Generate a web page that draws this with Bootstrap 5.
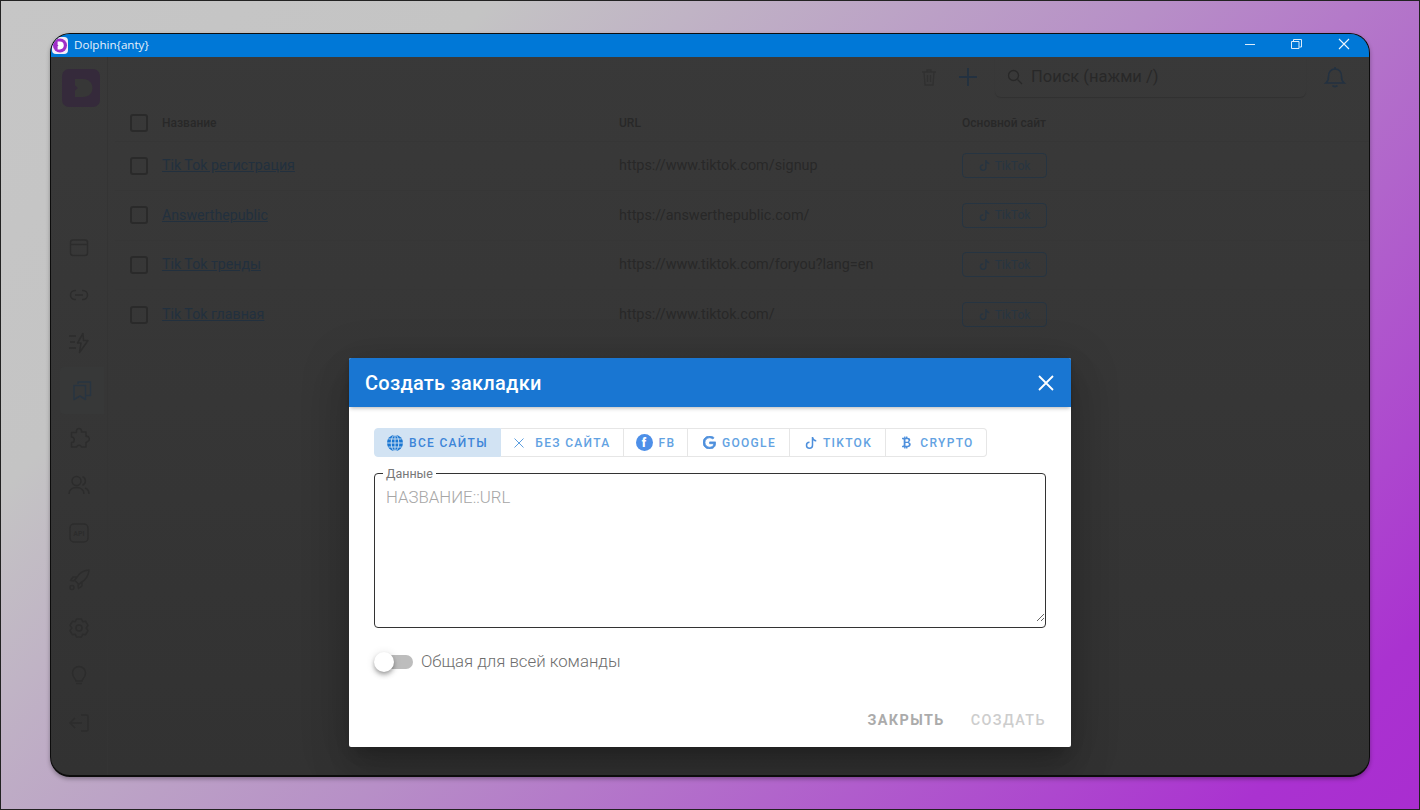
<!DOCTYPE html>
<html lang="ru">
<head>
<meta charset="utf-8">
<title>Dolphin{anty}</title>
<link href="https://cdn.jsdelivr.net/npm/bootstrap@5.3.0/dist/css/bootstrap.min.css" rel="stylesheet">
<style>
html,body{height:810px;overflow:hidden}
body{font-family:Roboto,"Liberation Sans",sans-serif;background:linear-gradient(135deg,#c6c6c6 0%,#c4c4c4 22%,#b78fc7 52%,#aa32d0 92%,#a92dd0 100%);border:1px solid #222;padding:32px 49px 33px 49px}
.app-win{position:relative;width:1320px;height:744px;border:1px solid #0c0c0c;border-bottom-width:2px;border-radius:20px;overflow:hidden;box-shadow:0 2px 4px rgba(0,0,0,.3);background:linear-gradient(180deg,#393939 0%,#363636 50%,#323232 100%)}
.title-bar{height:23px;background:#0078d7;color:#e4f0fb;font:11.600px/21px "Open Sans","Noto Sans",sans-serif;padding-left:1px}
.title-logo{width:16px;height:17px;margin-right:6px}
.win-ctl{width:48px;height:22px}
.app-body{height:719px}
.side{width:57px;border-right:1px solid #343434;padding-top:12px}
.side-logo{width:38px;height:38px;margin:0 0 0 11px}
.side-list{margin-top:117px}
.side-item{height:47.500px;width:56px;color:#2c2c2c}
.side-item.is-on{background:#373838;color:#283440;border-radius:4px 0 0 4px;width:44px;margin-left:9px}
.side-item svg{width:22px;height:22px}
.main-pane{min-width:0}
.top-row{height:40px;margin-bottom:9px}
.trash-ic{margin-right:19px}
.plus-ic{margin-right:17px}
.search-box{width:311px;height:39px;margin-right:17px;border-radius:0 0 6px 6px;box-shadow:0 1px 1px rgba(0,0,0,.14);color:#282828;font-size:16.500px;padding-left:12px}
.data-tbl{margin:0 0 0 7px;width:calc(100% - 7px);--bs-table-bg:transparent;color:#2b2b2b;font-size:14.400px;table-layout:fixed}
.data-tbl td,.data-tbl th{border-bottom:1px solid #363636;padding:0;vertical-align:middle}
.data-tbl th{font-size:12px;font-weight:500;height:35px;color:#282828}
.data-tbl td{height:49.600px;color:#282828}
.data-tbl a{color:#22303e;font-size:14.200px}
.box-check{display:block;width:18px;height:18px;border:2px solid #2a2a2a;border-radius:3px;margin-left:15px}
.site-tag{display:inline-flex;align-items:center;justify-content:center;gap:5px;width:85px;height:25px;border:1px solid #263441;border-radius:4px;font-size:12px;color:#273541}
.modal-layer{position:absolute;inset:0;display:flex;justify-content:center;align-items:flex-end;padding-bottom:28px}
.dlg{width:722px;height:389px;background:#fff;border-radius:2px;box-shadow:0 11px 15px -7px rgba(0,0,0,.2),0 24px 38px 3px rgba(0,0,0,.14),0 9px 46px 8px rgba(0,0,0,.12)}
.dlg-head{height:49px;background:#1976d2;color:#fff;padding:0 15px 0 16px;border-radius:2px 2px 0 0;box-shadow:0 2px 4px -1px rgba(0,0,0,.3)}
.dlg-title{font-size:20px;font-weight:500;letter-spacing:.25px;line-height:1;margin:0}
.dlg-close{width:20px;height:20px}
.dlg-body{padding:21px 25px 0}
.tab-grp{height:29px;display:inline-flex;vertical-align:top}
.tab-btn{height:29px;padding:0;font-size:12px;font-weight:500;letter-spacing:1.300px;color:#62a2e2;background:#fff;border:1px solid #e6e6e6;border-left-width:0;border-radius:0;display:inline-flex;align-items:center;justify-content:center;gap:6px;text-transform:uppercase;line-height:1}
.tab-btn:first-child{border-left-width:1px;border-radius:4px 0 0 4px;background:#d2e3f3;color:#3d85d8;border-color:#d2e3f3}
.tab-btn:last-child{border-radius:0 4px 4px 0}
.tab-btn svg text{text-transform:none}
.data-set{margin-top:10px;height:161px;position:relative;border:1px solid #333;border-radius:4px;padding:0 0 0 8px}
.data-set legend{float:none;width:auto;font-size:12.500px;line-height:13px;color:#777;padding:0 3px;margin:0}
.data-area{display:block;width:100%;height:142px;border:0;outline:0;padding:5px 0 0 3px;font:300 16.800px/24px Roboto,sans-serif;background:transparent;resize:vertical}
.data-area::placeholder{color:#a6a6a6;opacity:1}
.sw-row{margin-top:20px;height:28px;color:#6d6d6d;font-size:16.800px;font-weight:300}
.sw-track{position:relative;display:block;width:34px;height:14px;margin:0 8px 0 5px;background:#bdbdbd;border-radius:7px}
.sw-knob{position:absolute;left:-5px;top:-3px;width:20px;height:20px;border-radius:50%;background:#fff;box-shadow:0 2px 4px -1px rgba(0,0,0,.3),0 4px 5px rgba(0,0,0,.14),0 1px 10px rgba(0,0,0,.12)}
.dlg-foot{padding:36px 25px 0 0;gap:26px;font-size:14.400px;font-weight:700;letter-spacing:1.400px;text-transform:uppercase;color:#ababab}
.dlg-foot .btn{padding:0;border:0;font:inherit;letter-spacing:inherit;color:inherit;line-height:18px;text-transform:uppercase}
.dlg-foot .btn.is-off{color:#cdcdcd;font-weight:500}
</style>
</head>
<body>
<div class="app-win">
  <div class="title-bar d-flex align-items-center">
    <svg class="title-logo" viewBox="0 0 16 17"><rect width="16" height="17" rx="4" fill="#f4eefa"/><circle cx="8" cy="8.500" r="7" fill="#a02fc8"/><path d="M5.600 4.600h2.200c2.600 0 4 1.600 4 3.900s-1.400 3.900-4 3.900H5.600V9.300l.9-.8-.9-.8z" fill="#fff"/></svg>
    <span class="flex-grow-1 align-self-start">Dolphin{anty}</span>
    <svg class="win-ctl" viewBox="0 2 48 22"><path d="M21 11.500h10" stroke="#dcecfa" fill="none"/></svg>
    <svg class="win-ctl" viewBox="0 2 48 22"><path d="M21.500 8.500V6.500h8v7.500h-2M19.500 8.500h7.500v7h-7.500z" stroke="#dcecfa" fill="none"/></svg>
    <svg class="win-ctl" viewBox="0 2 48 22" style="margin-right:1px"><path d="M19 6l10 10M29 6L19 16" stroke="#eef6fd" stroke-width="1.100" fill="none"/></svg>
  </div>
  <div class="app-body d-flex">
    <aside class="side flex-shrink-0">
      <svg class="side-logo d-block" viewBox="0 0 38 38"><rect width="38" height="38" rx="7" fill="#352a3b"/><path d="M13 10h8c6 0 9.500 4 9.500 9s-3.500 9-9.500 9h-8v-6.500l3-2.500-3-2.500z" fill="#373737"/></svg>
      <div class="side-list d-flex flex-column">
        <div class="side-item d-flex align-items-center justify-content-center"><svg viewBox="0 0 22 22" fill="none" stroke="currentColor" stroke-width="1.500"><rect x="2.500" y="3" width="17" height="15.500" rx="2.500"/><path d="M2.500 7.500h17"/></svg></div>
        <div class="side-item d-flex align-items-center justify-content-center"><svg viewBox="0 0 22 22" fill="none" stroke="currentColor" stroke-width="1.500"><path d="M8 6.500H7a4.500 4.500 0 0 0 0 9h1M14 6.500h1a4.500 4.500 0 0 1 0 9h-1M7 11h8"/></svg></div>
        <div class="side-item d-flex align-items-center justify-content-center"><svg viewBox="0 0 22 22" fill="none" stroke="currentColor" stroke-width="1.500" stroke-linejoin="round"><path d="M1 4h7M2 10h5M1 16h7M15 1.500 9.500 11H13l-1.500 9.500L20 8.500h-4.500z"/></svg></div>
        <div class="side-item is-on d-flex align-items-center justify-content-center"><svg viewBox="0 0 22 22" fill="none" stroke="currentColor" stroke-width="1.500" stroke-linejoin="round"><path d="M7 5V3h12.500v13.500H15"/><path d="M3 6.500h11.500v14L9 17l-6 3.500z"/></svg></div>
        <div class="side-item d-flex align-items-center justify-content-center"><svg viewBox="0 0 22 22" fill="none" stroke="currentColor" stroke-width="1.500" stroke-linejoin="round"><path d="M8.500 3.500a2.600 2.600 0 0 1 5 0V5h4.500v4.500a2.600 2.600 0 0 1 1.500 5 2.600 2.600 0 0 1-1.500 1V20h-4.500a2.700 2.700 0 0 0-5 0H3.500v-4.500a2.700 2.700 0 0 0 0-5.500V5.500h5z"/></svg></div>
        <div class="side-item d-flex align-items-center justify-content-center"><svg viewBox="0 0 22 22" fill="none" stroke="currentColor" stroke-width="1.500"><circle cx="8.500" cy="7" r="4.500"/><path d="M1 20c0-4 3-6.500 7.500-6.500S16 16 16 20M14.500 2.800a4.500 4.500 0 0 1 0 8.400M17 14c2.500.8 4 3 4 6"/></svg></div>
        <div class="side-item d-flex align-items-center justify-content-center"><svg viewBox="0 0 22 22" fill="none" stroke="currentColor" stroke-width="1.500"><rect x="2" y="2" width="18" height="18" rx="4"/><text x="11" y="13.800" text-anchor="middle" font-family="Roboto" font-size="7" font-weight="700" stroke="none" fill="currentColor">API</text></svg></div>
        <div class="side-item d-flex align-items-center justify-content-center"><svg viewBox="0 0 22 22" fill="none" stroke="currentColor" stroke-width="1.500" stroke-linejoin="round"><path d="M21 1c-6 .500-10 3-12.500 8L6.500 11 11 15.500l2-2c4.500-2.500 7.500-6.500 8-12.500zM9 8H5l-2.500 3.500 4 .500M14 13v4l-3.500 2.500-.5-4"/><circle cx="4" cy="18.500" r="2"/></svg></div>
        <div class="side-item d-flex align-items-center justify-content-center"><svg viewBox="0 0 22 22" fill="none" stroke="currentColor" stroke-width="1.500" stroke-linejoin="round"><circle cx="11" cy="11" r="3"/><path d="M8.500 2h5l1.200 2.700 3-.4 2.300 4-1.800 2.700 1.800 2.700-2.300 4-3-.4L13.500 20h-5l-1.200-2.700-3 .4-2.300-4L3.800 11 2 8.300l2.300-4 3 .4z"/></svg></div>
        <div class="side-item d-flex align-items-center justify-content-center"><svg viewBox="0 0 22 22" fill="none" stroke="currentColor" stroke-width="1.500"><path d="M8 17c0-2-3.500-3.500-3.500-8a6.500 6.500 0 0 1 13 0c0 4.500-3.500 6-3.500 8zM8 19.500h6"/></svg></div>
        <div class="side-item d-flex align-items-center justify-content-center"><svg viewBox="0 0 22 22" fill="none" stroke="currentColor" stroke-width="1.500"><path d="M13 3h5.500a1.500 1.500 0 0 1 1.500 1.500v13a1.500 1.500 0 0 1-1.500 1.500H13M14 11H2M7 6l-5 5 5 5"/></svg></div>
      </div>
    </aside>
    <main class="main-pane flex-grow-1">
      <div class="top-row d-flex align-items-center justify-content-end">
        <svg width="20" height="20" viewBox="0 0 20 20" class="trash-ic" fill="none" stroke="#303030" stroke-width="1.300"><path d="M3 5h14M8 5V3h4v2M5 5l1 13h8l1-13M8.500 8v7M11.500 8v7"/></svg>
        <svg width="20" height="20" viewBox="0 0 20 20" class="plus-ic" fill="none" stroke="#233140" stroke-width="1.800"><path d="M10 1v18M1 10h18"/></svg>
        <div class="search-box d-flex align-items-center">
          <svg width="16" height="16" viewBox="0 0 16 16" class="me-2" fill="none" stroke="#282828" stroke-width="1.300"><circle cx="6.500" cy="6.500" r="5"/><path d="M10.500 10.500 15 15"/></svg>
          <span>Поиск (нажми /)</span>
        </div>
        <svg width="24" height="24" viewBox="0 0 24 24" style="margin-right:22px" fill="none" stroke="#233140" stroke-width="1.600"><path d="M3 18c2-1.500 2.500-3 2.500-6.500C5.500 7 8 4 12 4s6.500 3 6.500 7.500c0 3.500.5 5 2.500 6.500zM9.500 20.500c1 1.500 4 1.500 5 0M12 4V2"/></svg>
      </div>
      <table class="table data-tbl">
        <colgroup><col style="width:47px"><col style="width:457px"><col style="width:343px"><col></colgroup>
        <thead><tr><th><span class="box-check"></span></th><th>Название</th><th>URL</th><th>Основной сайт</th></tr></thead>
        <tbody>
          <tr><td><span class="box-check"></span></td><td><a href="#">Tik Tok регистрация</a></td><td>https://www.tiktok.com/signup</td><td><span class="site-tag"><svg width="11" height="11" viewBox="0 0 16 16" fill="#263441"><path d="M9 0h1.980c.144.715.540 1.617 1.235 2.512C12.895 3.389 13.797 4 15 4v2c-1.753 0-3.070-.814-4-1.829V11a5 5 0 1 1-5-5v2a3 3 0 1 0 3 3V0Z"/></svg>TikTok</span></td></tr>
          <tr><td><span class="box-check"></span></td><td><a href="#">Answerthepublic</a></td><td>https://answerthepublic.com/</td><td><span class="site-tag"><svg width="11" height="11" viewBox="0 0 16 16" fill="#263441"><path d="M9 0h1.980c.144.715.540 1.617 1.235 2.512C12.895 3.389 13.797 4 15 4v2c-1.753 0-3.070-.814-4-1.829V11a5 5 0 1 1-5-5v2a3 3 0 1 0 3 3V0Z"/></svg>TikTok</span></td></tr>
          <tr><td><span class="box-check"></span></td><td><a href="#">Tik Tok тренды</a></td><td>https://www.tiktok.com/foryou?lang=en</td><td><span class="site-tag"><svg width="11" height="11" viewBox="0 0 16 16" fill="#263441"><path d="M9 0h1.980c.144.715.540 1.617 1.235 2.512C12.895 3.389 13.797 4 15 4v2c-1.753 0-3.070-.814-4-1.829V11a5 5 0 1 1-5-5v2a3 3 0 1 0 3 3V0Z"/></svg>TikTok</span></td></tr>
          <tr><td><span class="box-check"></span></td><td><a href="#">Tik Tok главная</a></td><td>https://www.tiktok.com/</td><td><span class="site-tag"><svg width="11" height="11" viewBox="0 0 16 16" fill="#263441"><path d="M9 0h1.980c.144.715.540 1.617 1.235 2.512C12.895 3.389 13.797 4 15 4v2c-1.753 0-3.070-.814-4-1.829V11a5 5 0 1 1-5-5v2a3 3 0 1 0 3 3V0Z"/></svg>TikTok</span></td></tr>
        </tbody>
      </table>
    </main>
  </div>
  <div class="modal-layer">
    <div class="dlg">
      <div class="dlg-head d-flex align-items-center justify-content-between">
        <h5 class="dlg-title">Создать закладки</h5>
        <svg class="dlg-close" viewBox="0 0 20 20" fill="none" stroke="#fff" stroke-width="1.800"><path d="M3 3l14 14M17 3 3 17"/></svg>
      </div>
      <div class="dlg-body">
        <div class="tab-grp" role="group">
          <button type="button" class="btn tab-btn" style="width:127px"><svg width="16" height="16" viewBox="0 0 16 16"><circle cx="8" cy="8" r="8" fill="#1976d2"/><path d="M0 8h16M1.500 4h13M1.500 12h13M8 0v16" stroke="#d2e3f3" stroke-width=".9" fill="none"/><ellipse cx="8" cy="8" rx="3.800" ry="8" stroke="#d2e3f3" stroke-width=".9" fill="none"/></svg>Все сайты</button>
          <button type="button" class="btn tab-btn" style="width:123px"><svg width="12" height="12" viewBox="0 0 12 12" class="me-1" fill="none" stroke="#5d9fe0" stroke-width="1"><path d="M1.500 1.500l9 9M10.500 1.500l-9 9"/></svg>Без сайта</button>
          <button type="button" class="btn tab-btn" style="width:64px"><svg width="17" height="17" viewBox="0 0 17 17"><circle cx="8.500" cy="8.500" r="8.500" fill="#4d8fe8"/><text x="8.500" y="13" text-anchor="middle" font-family="Roboto" font-weight="900" font-size="12" fill="#fff">f</text></svg>FB</button>
          <button type="button" class="btn tab-btn" style="width:102px;padding-left:2px"><svg width="13" height="13" viewBox="2 2 20 20" fill="#4d8fdc"><path d="M21.350 11.100H12.180V13.830H18.690C18.360 17.640 15.190 19.270 12.190 19.270C8.360 19.270 5 16.250 5 12C5 7.900 8.200 4.730 12.200 4.730C15.290 4.730 17.100 6.700 17.100 6.700L19 4.720C19 4.720 16.560 2 12.100 2C6.420 2 2.030 6.800 2.030 12C2.030 17.050 6.160 22 12.250 22C17.600 22 21.500 18.330 21.500 12.910C21.500 11.760 21.350 11.100 21.350 11.100Z" stroke="#4d8fdc" stroke-width="1.200"/></svg>Google</button>
          <button type="button" class="btn tab-btn" style="width:96px;padding-left:2px"><svg width="12" height="12" viewBox="0 0 16 16" fill="#4d8fdc"><path d="M9 0h1.980c.144.715.540 1.617 1.235 2.512C12.895 3.389 13.797 4 15 4v2c-1.753 0-3.070-.814-4-1.829V11a5 5 0 1 1-5-5v2a3 3 0 1 0 3 3V0Z"/></svg>TikTok</button>
          <button type="button" class="btn tab-btn" style="width:101px;padding-left:1px"><svg width="15" height="15" viewBox="0 0 16 16" fill="#4d8fdc"><path d="M5.500 13v1.250c0 .138.112.250.250.250h1a.250.250 0 0 0 .250-.250V13h.500v1.250c0 .138.112.250.250.250h1a.250.250 0 0 0 .250-.250V13h.084c1.992 0 3.416-1.033 3.416-2.820 0-1.502-1.007-2.323-2.186-2.440v-.088c.970-.242 1.683-.974 1.683-2.190C11.997 3.930 10.847 3 9.092 3H9V1.750a.250.250 0 0 0-.250-.250h-1a.250.250 0 0 0-.250.250V3h-.573V1.750a.250.250 0 0 0-.250-.250H5.750a.250.250 0 0 0-.250.250V3l-1.998.011a.250.250 0 0 0-.250.250v.989c0 .137.110.250.248.250l.755-.005a.750.750 0 0 1 .745.750v5.505a.750.750 0 0 1-.750.750l-.748.011a.250.250 0 0 0-.250.250v1c0 .138.112.250.250.250L5.500 13zm1.427-8.513h1.719c.906 0 1.438.498 1.438 1.312 0 .871-.575 1.362-1.877 1.362h-1.280V4.487zm0 4.051h1.840c1.137 0 1.756.580 1.756 1.524 0 .953-.626 1.450-2.158 1.450H6.927V8.539z"/></svg>Crypto</button>
        </div>
        <fieldset class="data-set">
          <legend>Данные</legend>
          <textarea class="data-area" placeholder="НАЗВАНИЕ::URL"></textarea>
        </fieldset>
        <div class="sw-row d-flex align-items-center"><span class="sw-track"><span class="sw-knob"></span></span><span>Общая для всей команды</span></div>
      </div>
      <div class="dlg-foot d-flex justify-content-end">
        <button type="button" class="btn">Закрыть</button>
        <button type="button" class="btn is-off">Создать</button>
      </div>
    </div>
  </div>
</div>
<script src="https://cdn.jsdelivr.net/npm/bootstrap@5.3.0/dist/js/bootstrap.bundle.min.js"></script>
</body>
</html>
